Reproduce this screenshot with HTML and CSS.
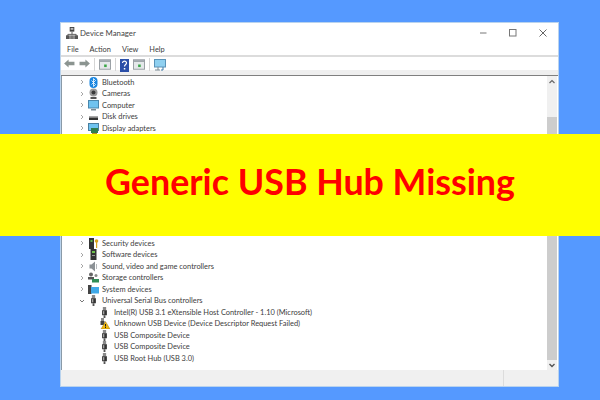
FILE: index.html
```html
<!DOCTYPE html>
<html lang="en">
<head>
  <meta charset="UTF-8" />
  <title>Generic USB Hub Missing</title>
  <link rel="stylesheet" href="styles.css">
</head>
<body>
  <svg class="defs" width="0" height="0">
    <symbol id="usb" viewBox="0 0 10 12">
      <rect x="3.2" y="0" width="3.6" height="3.5" fill="#8a8a8a"/>
      <rect x="2.4" y="3.5" width="5.2" height="5.5" fill="#333"/>
      <rect x="3.4" y="4.5" width="1.4" height="3.5" fill="#aaa"/>
      <rect x="4" y="9" width="2" height="3" fill="#555"/>
    </symbol>
    <symbol id="chev" viewBox="0 0 6 6">
      <path d="M2 1l2 2-2 2" fill="none" stroke="#a6a6a6" stroke-width="1"/>
    </symbol>
    <symbol id="sheet" viewBox="0 0 14 12">
      <rect x=".5" y=".5" width="13" height="11" fill="#e4e8ea" stroke="#8d9499"/>
      <rect x="1" y="1" width="12" height="2" fill="#9aa2a8"/>
      <rect x="6" y="6" width="3" height="3" fill="#3aa648"/>
    </symbol>
  </svg>

  <div class="window">
    <div class="titlebar">
      <svg class="app-icon" width="12" height="12" viewBox="0 0 13 13">
        <rect x="4" y="0" width="5" height="5" fill="#444"/>
        <rect x="5" y="1" width="3" height="2" fill="#bbb"/>
        <path d="M6.5 5v3M2 10V8h9v2" fill="none" stroke="#555"/>
        <rect x="0" y="9" width="4" height="4" fill="#555"/>
        <rect x="4.500" y="9" width="4" height="4" fill="#777"/>
        <rect x="9" y="9" width="4" height="4" fill="#555"/>
      </svg>
      <span class="title">Device Manager</span>
      <div class="controls">
        <svg width="8" height="8" viewBox="0 0 8 8"><path d="M1 4h6.500" stroke="#777" fill="none"/></svg>
        <svg width="8" height="8" viewBox="0 0 8 8"><rect x=".5" y=".5" width="6.500" height="6.500" stroke="#777" fill="none"/></svg>
        <svg width="8" height="8" viewBox="0 0 8 8"><path d="M.5.5l7 7M7.500.5l-7 7" stroke="#666" fill="none"/></svg>
      </div>
    </div>
    <div class="menubar">
      <span>File</span><span>Action</span><span>View</span><span>Help</span>
    </div>
    <div class="toolbar">
      <svg width="11" height="9" viewBox="0 0 12 10"><path d="M0 5l5-4.500V3h6.500v4H5v2.500z" fill="#8b9490"/></svg>
      <svg width="11" height="9" viewBox="0 0 12 10"><path d="M12 5L7 .5V3H.5v4H7v2.500z" fill="#8b9490"/></svg>
      <i class="tool-sep"></i>
      <svg width="12" height="11"><use href="#sheet"/></svg>
      <i class="tool-sep"></i>
      <svg width="9" height="13" viewBox="0 0 9 13">
        <rect width="9" height="13" fill="#2b4fa8"/>
        <path d="M2.500 4c0-2.500 4-2.500 4 0 0 1.500-2 1.500-2 3.500" fill="none" stroke="#fff" stroke-width="1.200"/>
        <rect x="3.800" y="9" width="1.500" height="1.500" fill="#fff"/>
      </svg>
      <svg width="12" height="11"><use href="#sheet"/></svg>
      <i class="tool-sep"></i>
      <svg width="12" height="12" viewBox="0 0 12 12">
        <rect x=".5" y=".5" width="11" height="7.500" fill="#8fd0f0" stroke="#5a93b8"/>
        <path d="M1 11h5M4 8v3" stroke="#7a8a94"/>
        <path d="M9 8v3h-2" stroke="#3c7aa8" fill="none"/>
      </svg>
    </div>

    <div class="content">
      <div class="tree">
        <div class="row">
          <svg class="chev" width="6" height="6"><use href="#chev"/></svg>
          <svg class="ico" width="11" height="11" viewBox="0 0 11 11">
            <rect x="1.500" y="0" width="8" height="11" rx="4" fill="#1a86e0"/>
            <path d="M3.500 3.500l4 4-2 2v-8l2 2-4 4" fill="none" stroke="#fff" stroke-width=".8"/>
          </svg>
          <span>Bluetooth</span>
        </div>
        <div class="row">
          <svg class="chev" width="6" height="6"><use href="#chev"/></svg>
          <svg class="ico" width="11" height="11" viewBox="0 0 11 11">
            <circle cx="5.500" cy="4.500" r="4" fill="#9a9a9a"/>
            <circle cx="5.500" cy="4.500" r="2" fill="#3a3a3a"/>
            <rect x="2.500" y="9" width="6" height="2" fill="#555"/>
          </svg>
          <span>Cameras</span>
        </div>
        <div class="row">
          <svg class="chev" width="6" height="6"><use href="#chev"/></svg>
          <svg class="ico" width="11" height="11" viewBox="0 0 11 11">
            <rect x=".5" y=".5" width="10" height="7.500" fill="#6fc3f0" stroke="#4a87ad"/>
            <rect x="3" y="9" width="5" height="1.500" fill="#7b8b95"/>
          </svg>
          <span>Computer</span>
        </div>
        <div class="row">
          <svg class="chev" width="6" height="6"><use href="#chev"/></svg>
          <svg class="ico" width="11" height="11" viewBox="0 0 11 11">
            <rect x="1" y="5" width="9" height="1.500" fill="#aaa"/>
            <rect x="1" y="6.500" width="9" height="2.500" fill="#333"/>
          </svg>
          <span>Disk drives</span>
        </div>
        <div class="row">
          <svg class="chev" width="6" height="6"><use href="#chev"/></svg>
          <svg class="ico" width="11" height="11" viewBox="0 0 11 11">
            <rect x=".5" y=".5" width="10" height="7" fill="#6fc3f0" stroke="#4a7f9f"/>
            <rect x="3" y="5" width="7" height="5" fill="#2f7d4f"/>
            <rect x="4" y="10" width="5" height="1" fill="#b58a2a"/>
          </svg>
          <span>Display adapters</span>
        </div>

        <div class="tree-gap"></div>

        <div class="row">
          <svg class="chev" width="6" height="6"><use href="#chev"/></svg>
          <svg class="ico" width="11" height="11" viewBox="0 0 11 11">
            <rect x="1" y="0" width="5" height="11" fill="#333"/>
            <rect x="2.500" y="2" width="2" height="2" fill="#5ab04a"/>
            <circle cx="8.500" cy="3" r="1.800" fill="#d9a520"/>
            <rect x="8" y="4" width="1.200" height="6" fill="#d9a520"/>
          </svg>
          <span>Security devices</span>
        </div>
        <div class="row">
          <svg class="chev" width="6" height="6"><use href="#chev"/></svg>
          <svg class="ico" width="11" height="11" viewBox="0 0 11 11">
            <rect x="2.500" y="0" width="6" height="11" fill="#333"/>
            <rect x="4" y="2" width="3" height="2" fill="#6cc04a"/>
            <rect x="4" y="6" width="3" height="1" fill="#999"/>
          </svg>
          <span>Software devices</span>
        </div>
        <div class="row">
          <svg class="chev" width="6" height="6"><use href="#chev"/></svg>
          <svg class="ico" width="11" height="11" viewBox="0 0 11 11">
            <path d="M1.500 3.500h2L7 .5v10l-3.500-3h-2z" fill="#8c9296"/>
            <path d="M8.500 3v5" stroke="#b5b9bc"/>
          </svg>
          <span>Sound, video and game controllers</span>
        </div>
        <div class="row">
          <svg class="chev" width="6" height="6"><use href="#chev"/></svg>
          <svg class="ico" width="11" height="11" viewBox="0 0 11 11">
            <circle cx="3" cy="2.500" r="2" fill="#666"/>
            <rect x="0" y="5" width="6" height="2.500" fill="#555"/>
            <rect x="4" y="7" width="7" height="3.500" fill="#2f8d55"/>
            <circle cx="8" cy="3.500" r="1.500" fill="#888"/>
          </svg>
          <span>Storage controllers</span>
        </div>
        <div class="row">
          <svg class="chev" width="6" height="6"><use href="#chev"/></svg>
          <svg class="ico" width="11" height="11" viewBox="0 0 11 11">
            <rect x="0" y="1" width="3.500" height="9" fill="#444"/>
            <rect x="3" y="3" width="8" height="6.500" fill="#3fa9e8"/>
          </svg>
          <span>System devices</span>
        </div>
        <div class="row">
          <svg class="chev" width="6" height="6" viewBox="0 0 6 6"><path d="M1 2l2 2 2-2" fill="none" stroke="#777"/></svg>
          <svg class="ico" width="11" height="11"><use href="#usb"/></svg>
          <span>Universal Serial Bus controllers</span>
        </div>
        <div class="row child">
          <svg class="ico" width="11" height="11"><use href="#usb"/></svg>
          <span>Intel(R) USB 3.1 eXtensible Host Controller - 1.10 (Microsoft)</span>
        </div>
        <div class="row child">
          <svg class="ico" width="11" height="11" viewBox="0 0 11 11">
            <rect x="2" y="0" width="3" height="3" fill="#8a8a8a"/>
            <rect x="1.500" y="3" width="4" height="4" fill="#444"/>
            <path d="M6.500 3.500L11 11H2z" fill="#f2b90f" stroke="#8a6a10" stroke-width=".4"/>
            <rect x="6" y="6" width="1" height="2.500" fill="#222"/>
            <rect x="6" y="9" width="1" height="1" fill="#222"/>
          </svg>
          <span>Unknown USB Device (Device Descriptor Request Failed)</span>
        </div>
        <div class="row child">
          <svg class="ico" width="11" height="11"><use href="#usb"/></svg>
          <span>USB Composite Device</span>
        </div>
        <div class="row child">
          <svg class="ico" width="11" height="11"><use href="#usb"/></svg>
          <span>USB Composite Device</span>
        </div>
        <div class="row child">
          <svg class="ico" width="11" height="11"><use href="#usb"/></svg>
          <span>USB Root Hub (USB 3.0)</span>
        </div>
      </div>
      <div class="scrollbar">
        <div class="arrow">
          <svg width="6" height="5" viewBox="0 0 6 5"><path d="M.5 4L3 1.500 5.500 4" fill="none" stroke="#666" stroke-width="1.200"/></svg>
        </div>
        <div class="track"></div>
        <div class="thumb"></div>
        <div class="arrow">
          <svg width="6" height="5" viewBox="0 0 6 5"><path d="M.5 1L3 3.500 5.500 1" fill="none" stroke="#555" stroke-width="1.400"/></svg>
        </div>
      </div>
    </div>

    <div class="statusbar"><i></i></div>
  </div>

  <div class="banner">Generic USB Hub Missing</div>
</body>
</html>
```

FILE: styles.css
```css
html, body {
  margin: 0;
  height: 100%;
}
body {
  width: 600px;
  height: 400px;
  overflow: hidden;
  position: relative;
  background: #5599ff;
  padding: 22px 41px 13px 60px;
  box-sizing: border-box;
  font-family: Lato, "Noto Sans", sans-serif;
  color: #3c3c3c;
}
.defs {
  position: absolute;
}
.window {
  height: 100%;
  background: #fff;
  border: 1px solid #b9d3ee;
  box-sizing: border-box;
  display: flex;
  flex-direction: column;
}
.titlebar {
  height: 20px;
  display: flex;
  align-items: center;
  padding-left: 5px;
  font-size: 7.8px;
}
.app-icon {
  margin-right: 2px;
}
.title {
  color: #444;
}
.controls {
  margin-left: auto;
  display: flex;
  gap: 22px;
  padding-right: 11px;
}
.menubar {
  height: 12px;
  padding-left: 6px;
  display: flex;
  gap: 11px;
  align-items: center;
  font-size: 7.4px;
  border-bottom: 2px solid #dcdcdc;
}
.toolbar {
  display: flex;
  align-items: flex-start;
  gap: 4px;
  padding-left: 3px;
  padding-top: 1px;
  background: linear-gradient(#fff 72%, #efefef 72%);
  border-bottom: 1px solid #7f7f7f;
  height: 17px;
}
.toolbar svg {
  margin-top: 1px;
}
.tool-sep {
  width: 1px;
  height: 13px;
  background: #d5d5d5;
}
.content {
  flex: 1;
  display: flex;
  min-height: 0;
  border-left: 1px solid #8a9aa8;
}
.tree {
  flex: 1;
  padding-top: 0.5px;
  font-size: 7.45px;
}
.row {
  height: 11.5px;
  display: flex;
  align-items: center;
  padding-left: 17px;
  white-space: nowrap;
}
.chev {
  margin-right: 3px;
}
.ico {
  margin-right: 3px;
}
.row.child {
  padding-left: 37px;
}
.row.child .ico {
  margin-right: 4px;
}
.tree-gap {
  height: 103.5px;
}
.scrollbar {
  width: 10px;
  margin-right: 1.500px;
  display: flex;
  flex-direction: column;
  background: #f0f0f0;
}
.arrow {
  height: 10px;
  display: flex;
  align-items: center;
  justify-content: center;
}
.track {
  height: 31px;
}
.thumb {
  flex: 1;
  background: #cdcdcd;
}
.statusbar {
  height: 16px;
  background: #f0f0f0;
  display: flex;
  justify-content: flex-end;
  padding-right: 54px;
}
.statusbar i {
  width: 1px;
  background: #dcdcdc;
}
.banner {
  position: absolute;
  left: 0;
  right: 0;
  top: 134px;
  height: 102px;
  background: #ffff00;
  color: #ff0000;
  font-size: 35.8px;
  font-weight: 700;
  display: flex;
  align-items: center;
  justify-content: center;
  padding: 0 0 7px 20px;
  box-sizing: border-box;
}
```
